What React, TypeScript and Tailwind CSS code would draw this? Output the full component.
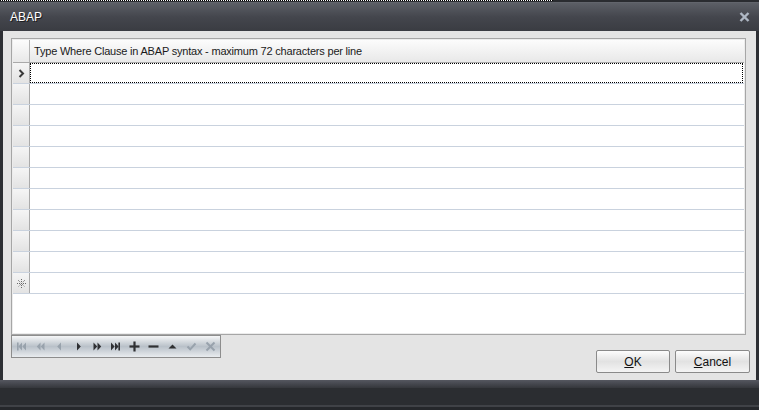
import React from 'react';

const dataRows = Array.from({ length: 10 }, (_, i) => i);

function NavIcon({ kind, disabled }: { kind: string; disabled?: boolean }) {
  const c = disabled ? '#98a2ac' : '#2f3033';
  return (
    <svg width="11" height="11" viewBox="0 0 11 11" className="block">
      {kind === 'first' && (
        <g fill={c}>
          <rect x="1" y="1.5" width="1.6" height="8" />
          <polygon points="6,1.5 6,9.5 2.4,5.5" />
          <polygon points="10,1.5 10,9.5 6.4,5.5" />
        </g>
      )}
      {kind === 'prevPage' && (
        <g fill={c}>
          <polygon points="5.5,1.5 5.5,9.5 1.8,5.5" />
          <polygon points="9.5,1.5 9.5,9.5 5.8,5.5" />
        </g>
      )}
      {kind === 'prev' && <polygon fill={c} points="7,1.5 7,9.5 3.2,5.5" />}
      {kind === 'next' && <polygon fill={c} points="4,1.5 4,9.5 7.8,5.5" />}
      {kind === 'nextPage' && (
        <g fill={c}>
          <polygon points="1.5,1.5 1.5,9.5 5.2,5.5" />
          <polygon points="5.5,1.5 5.5,9.5 9.2,5.5" />
        </g>
      )}
      {kind === 'last' && (
        <g fill={c}>
          <polygon points="1,1.5 1,9.5 4.6,5.5" />
          <polygon points="5,1.5 5,9.5 8.6,5.5" />
          <rect x="8.4" y="1.5" width="1.6" height="8" />
        </g>
      )}
      {kind === 'plus' && (
        <g fill={c}>
          <rect x="0.5" y="4.4" width="10" height="2.2" />
          <rect x="4.4" y="0.5" width="2.2" height="10" />
        </g>
      )}
      {kind === 'minus' && <rect fill={c} x="0.5" y="4.4" width="10" height="2.2" />}
      {kind === 'up' && <polygon fill={c} points="1.5,7.5 9.5,7.5 5.5,3.5" />}
      {kind === 'check' && (
        <polyline points="1.5,5.5 4.2,8.3 9.5,2.5" fill="none" stroke={c} strokeWidth="2" />
      )}
      {kind === 'cancel' && (
        <g stroke={c} strokeWidth="2">
          <line x1="1.5" y1="1.5" x2="9.5" y2="9.5" />
          <line x1="9.5" y1="1.5" x2="1.5" y2="9.5" />
        </g>
      )}
    </svg>
  );
}

function Indicator({ children }: { children?: React.ReactNode }) {
  return (
    <div className="w-[17px] h-full flex items-center justify-center bg-gradient-to-b from-[#f5f5f5] to-[#e3e3e3] border-r border-[#a9a9a9]">
      {children}
    </div>
  );
}

export default function App(): React.JSX.Element {
  const navItems: { kind: string; disabled?: boolean }[] = [
    { kind: 'first', disabled: true },
    { kind: 'prevPage', disabled: true },
    { kind: 'prev', disabled: true },
    { kind: 'next' },
    { kind: 'nextPage' },
    { kind: 'last' },
    { kind: 'plus' },
    { kind: 'minus' },
    { kind: 'up' },
    { kind: 'check', disabled: true },
    { kind: 'cancel', disabled: true },
  ];

  return (
    <div className="w-[759px] h-[410px] flex flex-col bg-[#2d2f34] overflow-hidden font-['Liberation_Sans',Arial,sans-serif] text-[11px] text-[#1e1e1e]">
      {/* top dotted strip */}
      <div className="h-[2px] bg-[#2a2c30]">
        <div className="h-px w-[553px] bg-[repeating-linear-gradient(90deg,#000_0_1px,#fff_1px_2px)]" />
      </div>

      {/* Title bar */}
      <div className="h-[29px] flex items-center justify-between pl-[10px] pr-[9px] bg-gradient-to-b from-[#5c5f66] via-[#44464d] to-[#3a3c42] border-t border-[#62656c]">
        <span className="text-white text-[12px] [text-shadow:1px_1px_0_#1c1d20] -mt-[1px]">ABAP</span>
        <svg width="11" height="10" viewBox="0 0 11 10" className="-mt-[1px]">
          <g stroke="#aeb7c3" strokeWidth="2.4">
            <line x1="1.5" y1="1" x2="9.5" y2="9" />
            <line x1="9.5" y1="1" x2="1.5" y2="9" />
          </g>
        </svg>
      </div>

      {/* Body */}
      <div className="flex-1 px-[3px]">
        <div className="h-full bg-[#e4e4e4] flex flex-col pl-[8px] pr-[6px] pt-[7px]">
          {/* Grid */}
          <div className="h-[297px] mr-[4px] border border-[#a6a6a6] bg-[#ececec] p-px">
            <div className="h-full bg-white flex flex-col">
              {/* Header */}
              <div className="h-[23px] flex border-b border-[#a9a9a9] bg-gradient-to-b from-[#fcfcfc] to-[#e8e8e8]">
                <div className="w-[17px] border-r border-[#b4b4b4]" />
                <div className="flex-1 flex items-center pl-[4px] text-[#1a1a1a] tracking-[-0.2px]">
                  Type Where Clause in ABAP syntax - maximum 72 characters per line
                </div>
              </div>

              {/* Focus row */}
              <div className="h-[21px] flex border-b border-[#c9d2de]">
                <Indicator>
                  <svg width="7" height="9" viewBox="0 0 7 9">
                    <polyline points="1.5,1 5,4.5 1.5,8" fill="none" stroke="#3a3a3a" strokeWidth="2" />
                  </svg>
                </Indicator>
                <div className="flex-1 border border-dotted border-black mr-px" />
              </div>

              {dataRows.slice(1).map((r) => (
                <div key={r} className="h-[21px] flex border-b border-[#c9d2de]">
                  <Indicator />
                  <div className="flex-1" />
                </div>
              ))}

              {/* New row */}
              <div className="h-[21px] flex border-b border-[#c9d2de]">
                <Indicator>
                  <svg width="9" height="9" viewBox="0 0 9 9">
                    <g stroke="#6a6a6a" strokeWidth="1" strokeDasharray="1 1">
                      <line x1="4.5" y1="0" x2="4.5" y2="9" />
                      <line x1="0" y1="4.5" x2="9" y2="4.5" />
                      <line x1="1" y1="1" x2="8" y2="8" />
                      <line x1="8" y1="1" x2="1" y2="8" />
                    </g>
                  </svg>
                </Indicator>
                <div className="flex-1" />
              </div>
            </div>
          </div>

          {/* Navigator + buttons */}
          <div className="flex items-start">
            <div className="w-[210px] h-[23px] border border-[#8d8d8d] flex items-center bg-gradient-to-b from-[#f6f7f8] via-[#b9c1c9] to-[#e9ecef]">
              {navItems.map((n) => (
                <div key={n.kind} className="w-[19px] flex justify-center">
                  <NavIcon kind={n.kind} disabled={n.disabled} />
                </div>
              ))}
            </div>
            <div className="ml-auto mt-[15px] flex gap-[5px]">
              <button className="w-[74px] h-[23px] rounded-[2px] border border-[#8a8a8a] bg-gradient-to-b from-[#fdfdfd] via-[#e2e2e2] to-[#f4f4f4] text-[12px] text-[#111] flex items-center justify-center">
                <span><span className="underline">O</span>K</span>
              </button>
              <button className="w-[75px] h-[23px] rounded-[2px] border border-[#8a8a8a] bg-gradient-to-b from-[#fdfdfd] via-[#e2e2e2] to-[#f4f4f4] text-[12px] text-[#111] flex items-center justify-center">
                <span><span className="underline">C</span>ancel</span>
              </button>
            </div>
          </div>
        </div>
      </div>

      {/* Bottom bar */}
      <div className="h-[30px] flex flex-col">
        <div className="h-[8px] bg-gradient-to-b from-[#555760] to-[#35373c]" />
        <div className="flex-1 bg-[#2b2d31] border-b-2 border-[#404247]" />
        <div className="h-[3px] bg-[#25272b]" />
      </div>
    </div>
  );
}
